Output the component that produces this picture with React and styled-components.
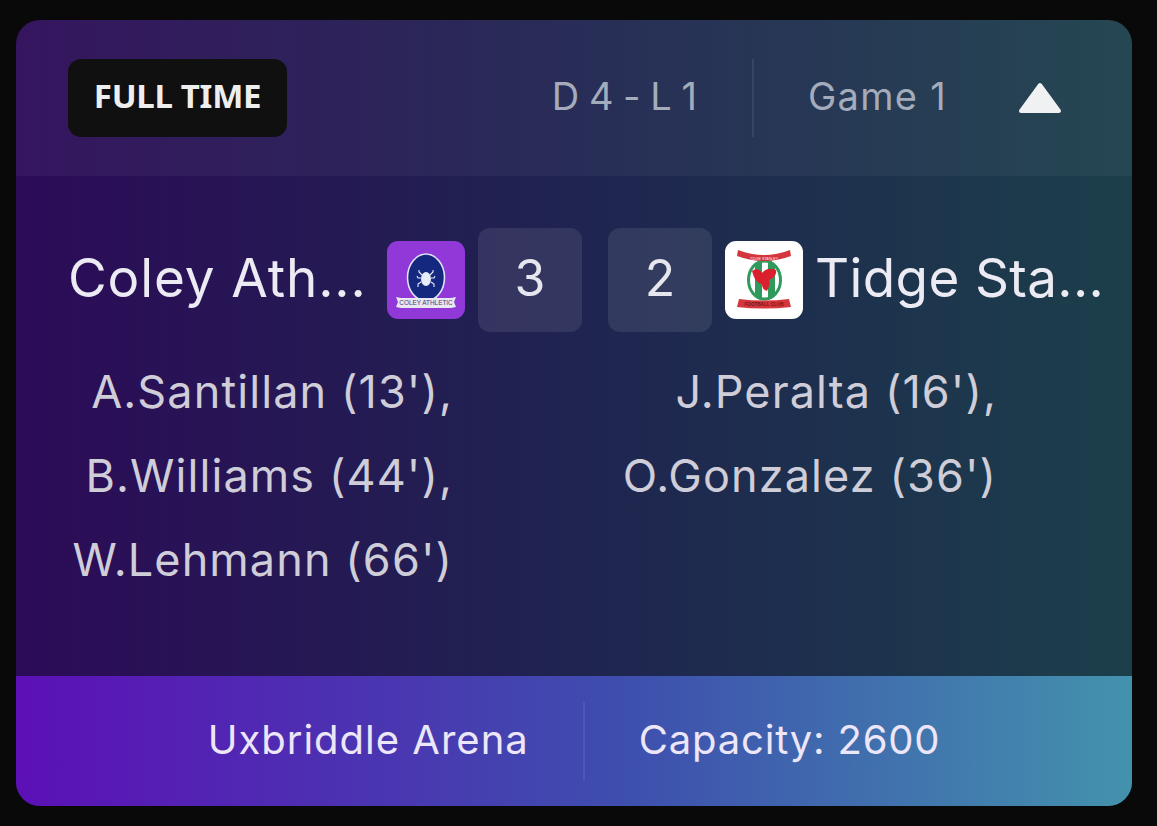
import styled, { createGlobalStyle } from 'styled-components';

const GlobalStyle = createGlobalStyle`
  html, body {
    margin: 0;
    background: #090909;
    font-family: Inter, "Noto Sans", sans-serif;
  }
`;

const Page = styled.div`
  padding: 20px 25px 20px 16px;
  width: 1157px;
  height: 826px;
  box-sizing: border-box;
`;

const Card = styled.div`
  width: 1116px;
  height: 786px;
  display: flex;
  flex-direction: column;
  border-radius: 24px;
  overflow: hidden;
  background: linear-gradient(90deg, #2c0b58 0%, #1f2450 50%, #1c3f4b 100%);
`;

const Header = styled.header`
  height: 156px;
  flex: none;
  display: flex;
  align-items: center;
  justify-content: space-between;
  padding: 0 70px 0 52px;
  background: rgba(255, 255, 255, 0.045);
`;

const Badge = styled.div`
  width: 219px;
  height: 78px;
  padding-bottom: 5px;
  box-sizing: border-box;
  display: flex;
  align-items: center;
  justify-content: center;
  border-radius: 13px;
  background: #101010;
  color: #eeeeee;
  font-size: 33px;
  font-weight: 700;
  font-family: "Noto Sans", sans-serif;
  letter-spacing: -0.3px;
`;

const Meta = styled.div`
  display: flex;
  align-items: center;
`;

const MetaText = styled.span`
  color: #a4acbc;
  font-size: 38px;
  font-weight: 400;
  position: relative;
  top: -2px;
  letter-spacing: ${(p) => p.$spacing || '0'};
  word-spacing: ${(p) => p.$words || '0'};
`;

const Divider = styled.div`
  width: 2px;
  height: 78px;
  margin: 0 54px;
  background: rgba(255, 255, 255, 0.08);
`;

const Arrow = styled.svg`
  width: 44px;
  height: 32px;
  margin-left: 71px;
  display: block;
`;

const Body = styled.main`
  flex: 1;
  padding: 52px 0 0 52px;
`;

const ScoreRow = styled.div`
  display: flex;
  align-items: center;
  height: 104px;
`;

const TeamName = styled.div`
  color: #eceaf2;
  font-size: 53px;
  font-weight: 400;
  white-space: nowrap;
  padding-bottom: 5px;
  letter-spacing: ${(p) => p.$spacing};
`;

const LeftTeam = styled(TeamName)`
  width: 299px;
`;

const RightTeam = styled(TeamName)`
  margin-left: 12px;
`;

const Crest = styled.div`
  width: 78px;
  height: 78px;
  border-radius: 11px;
  flex: none;
  background: ${(p) => p.$bg};
  overflow: hidden;
  margin: ${(p) => p.$margin};
`;

const ScoreBox = styled.div`
  width: 104px;
  height: 104px;
  flex: none;
  padding-bottom: 5px;
  box-sizing: border-box;
  display: flex;
  align-items: center;
  justify-content: center;
  border-radius: 12px;
  background: rgba(255, 255, 255, 0.09);
  color: #e6e6ee;
  font-size: 50px;
  font-weight: 400;
  margin-right: ${(p) => p.$gap || '0'};
`;

const Scorers = styled.div`
  display: flex;
  gap: 159px;
  margin-top: 18px;
`;

const ScorerList = styled.ul`
  width: 385px;
  margin: 0;
  padding: 0;
  list-style: none;
  text-align: right;
`;

const Scorer = styled.li`
  height: 84px;
  line-height: 84px;
  color: #cfcdd8;
  font-size: 45px;
  letter-spacing: 1.1px;
  white-space: nowrap;
`;

const Footer = styled.footer`
  height: 130px;
  flex: none;
  display: flex;
  align-items: center;
  justify-content: center;
  background: linear-gradient(90deg, #5c10b6 0%, #3e4fae 55%, #4392ad 100%);
`;

const FooterText = styled.span`
  color: #ece6f8;
  font-size: 40px;
  font-weight: 400;
  letter-spacing: ${(p) => p.$spacing};
  position: relative;
  top: -2px;
`;

function ColeyCrest() {
  return (
    <svg viewBox="0 0 78 78" width="78" height="78">
      <ellipse cx="39" cy="36.5" rx="18.5" ry="23.5" fill="#14287f" stroke="#dfe3f5" strokeWidth="1.6" />
      <g stroke="#e8ecf8" strokeWidth="1.1" fill="none">
        <path d="M35 34l-3-3v-2M34 37h-3l-1-2M34 41l-3 2v3M43 34l3-3v-2M44 37h3l1-2M44 41l3 2v3" />
      </g>
      <ellipse cx="39" cy="38" rx="5" ry="7" fill="#e8ecf8" />
      <path d="M9 56l5 1h50l5-1-2 5 2 5-5 1H14l-5-1 2-5z" fill="#e9e7ef" />
      <text x="39" y="64" textAnchor="middle" fontSize="6.4" fontFamily="Liberation Sans" fill="#4a3a78">
        COLEY ATHLETIC
      </text>
    </svg>
  );
}

function TidgeCrest() {
  return (
    <svg viewBox="0 0 78 78" width="78" height="78">
      <defs>
        <clipPath id="tidge-oval">
          <ellipse cx="39.5" cy="39" rx="17.5" ry="20" />
        </clipPath>
      </defs>
      <ellipse cx="39.5" cy="39" rx="17.5" ry="20" fill="#ffffff" />
      <g clipPath="url(#tidge-oval)" fill="#2f9a5c">
        <rect x="30" y="15" width="7" height="48" />
        <rect x="43" y="15" width="7" height="48" />
      </g>
      <ellipse cx="39.5" cy="39" rx="16" ry="19" fill="none" stroke="#2f9a5c" strokeWidth="3" />
      <path d="M13 9q26 10 52 0l1 6q-27 10-54 0z" fill="#d4363e" />
      <text x="39" y="19" textAnchor="middle" fontSize="3.6" fontFamily="Liberation Sans" fill="#fbe9e9">
        TIDGE STANLEY
      </text>
      <path d="M27 30c4-3 8-2 10 2 2-3 8-6 14-3 1 5-3 9-7 10 1 4 0 7-2 11-3-1-5-3-5-7-4 0-8-5-10-13z" fill="#d9202c" />
      <path d="M14 58q25 3 50 0l2 8q-27 3-54 0z" fill="#d4363e" />
      <text x="39" y="64.5" textAnchor="middle" fontSize="4.6" fontWeight="700" fontFamily="Liberation Sans" fill="#7a1418">
        FOOTBALL CLUB
      </text>
    </svg>
  );
}

export default function App() {
  return (
    <Page>
      <GlobalStyle />
      <Card>
        <Header>
          <Badge>FULL TIME</Badge>
          <Meta>
            <MetaText $spacing="1px" $words="-3px">D 4 - L 1</MetaText>
            <Divider />
            <MetaText $spacing="1.3px">Game 1</MetaText>
            <Arrow viewBox="0 0 44 32">
              <path d="M22 3L41 29H3z" fill="#f0f1f3" stroke="#f0f1f3" strokeWidth="4" strokeLinejoin="round" />
            </Arrow>
          </Meta>
        </Header>

        <Body>
          <ScoreRow>
            <LeftTeam $spacing="0.9px">Coley Ath...</LeftTeam>
            <Crest $bg="#9038d8" $margin="0 13px 0 20px">
              <ColeyCrest />
            </Crest>
            <ScoreBox $gap="26px">3</ScoreBox>
            <ScoreBox>2</ScoreBox>
            <Crest $bg="#ffffff" $margin="0 0 0 13px">
              <TidgeCrest />
            </Crest>
            <RightTeam $spacing="0.35px">Tidge Sta...</RightTeam>
          </ScoreRow>
          <Scorers>
            <ScorerList>
              <Scorer>A.Santillan (13'),</Scorer>
              <Scorer>B.Williams (44'),</Scorer>
              <Scorer>W.Lehmann (66')</Scorer>
            </ScorerList>
            <ScorerList>
              <Scorer>J.Peralta (16'),</Scorer>
              <Scorer>O.Gonzalez (36')</Scorer>
            </ScorerList>
          </Scorers>
        </Body>

        <Footer>
          <FooterText $spacing="1px">Uxbriddle Arena</FooterText>
          <Divider />
          <FooterText $spacing="0.8px">Capacity: 2600</FooterText>
        </Footer>
      </Card>
    </Page>
  );
}
